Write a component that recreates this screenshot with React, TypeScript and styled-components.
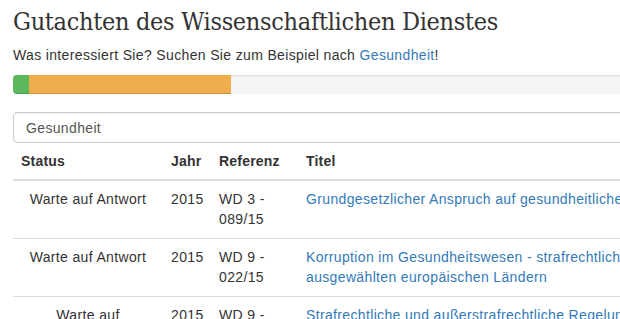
import React from "react";
import styled, { createGlobalStyle } from "styled-components";

const Global = createGlobalStyle`
  html, body { margin: 0; padding: 0; overflow: hidden; background: #fff; }
  body {
    font-family: "Liberation Sans", Arial, sans-serif;
    font-size: 14px;
    line-height: 20px;
    letter-spacing: 0.35px;
    color: #333;
  }
`;

const Container = styled.div`
  width: 1140px;
  padding: 0 13px;
`;

const Title = styled.h1`
  font-family: "DejaVu Serif", "Liberation Serif", serif;
  font-stretch: condensed;
  font-weight: normal;
  font-size: 25px;
  line-height: 32px;
  letter-spacing: -0.3px;
  margin: 6px 0 7px;
  color: #333;
`;

const Lead = styled.p`
  margin: 0 0 10px;
`;

const Link = styled.a`
  color: #337ab7;
  text-decoration: none;
`;

const Progress = styled.div`
  display: flex;
  height: 19px;
  margin-bottom: 18px;
  background: #f5f5f5;
  border-radius: 4px;
  overflow: hidden;
  box-shadow: inset 0 1px 2px rgba(0, 0, 0, 0.1);
`;

const Bar = styled.div<{ $color: string }>`
  height: 100%;
  background: ${(p) => p.$color};
  box-shadow: inset 0 -1px 0 rgba(0, 0, 0, 0.15);
`;

const Search = styled.input`
  display: block;
  box-sizing: border-box;
  width: 100%;
  height: 31px;
  padding: 5px 12px;
  font-family: "Liberation Sans", Arial, sans-serif;
  font-size: 14px;
  letter-spacing: 0.35px;
  color: #555;
  border: 1px solid #ccc;
  border-radius: 4px;
  box-shadow: inset 0 1px 1px rgba(0, 0, 0, 0.075);
  outline: none;
`;

const Table = styled.table`
  width: 100%;
  border-collapse: collapse;
  table-layout: fixed;
`;

const Th = styled.th<{ $w?: number }>`
  box-sizing: border-box;
  width: ${(p) => (p.$w ? `${p.$w}px` : "auto")};
  text-align: left;
  font-weight: bold;
  letter-spacing: 0.2px;
  padding: 8px;
  border-bottom: 2px solid #ddd;
  vertical-align: bottom;
`;

const Td = styled.td<{ $center?: boolean }>`
  padding: 8px 8px 9px;
  border-top: 1px solid #ddd;
  vertical-align: top;
  text-align: ${(p) => (p.$center ? "center" : "left")};
`;

const rows = [
  {
    status: "Warte auf Antwort",
    year: "2015",
    ref: "WD 3 - 089/15",
    title: "Grundgesetzlicher Anspruch auf gesundheitliche Versorgung",
  },
  {
    status: "Warte auf Antwort",
    year: "2015",
    ref: "WD 9 - 022/15",
    title:
      "Korruption im Gesundheitswesen - strafrechtliche Regelungen in ausgewählten europäischen Ländern",
  },
  {
    status: "Warte auf Vermittlung",
    year: "2015",
    ref: "WD 9 - 015/15",
    title:
      "Strafrechtliche und außerstrafrechtliche Regelungen zur Korruption im Gesundheitswesen",
  },
];

export default function App() {
  return (
    <>
      <Global />
      <Container>
        <Title>Gutachten des Wissenschaftlichen Dienstes</Title>
        <Lead>
          Was interessiert Sie? Suchen Sie zum Beispiel nach{" "}
          <Link href="#">Gesundheit</Link>!
        </Lead>
        <Progress>
          <Bar $color="#5cb85c" style={{ width: "1.41%" }} />
          <Bar $color="#f0ad4e" style={{ width: "17.75%" }} />
        </Progress>
        <Search defaultValue="Gesundheit" />
        <Table>
          <thead>
            <tr>
              <Th $w={150}>Status</Th>
              <Th $w={48}>Jahr</Th>
              <Th $w={87}>Referenz</Th>
              <Th $w={470}>Titel</Th>
              <Th>Ausschuss</Th>
            </tr>
          </thead>
          <tbody>
            {rows.map((r, i) => (
              <tr key={i}>
                <Td $center>{r.status}</Td>
                <Td>{r.year}</Td>
                <Td>{r.ref}</Td>
                <Td>
                  <Link href="#">{r.title}</Link>
                </Td>
                <Td></Td>
              </tr>
            ))}
          </tbody>
        </Table>
      </Container>
    </>
  );
}
